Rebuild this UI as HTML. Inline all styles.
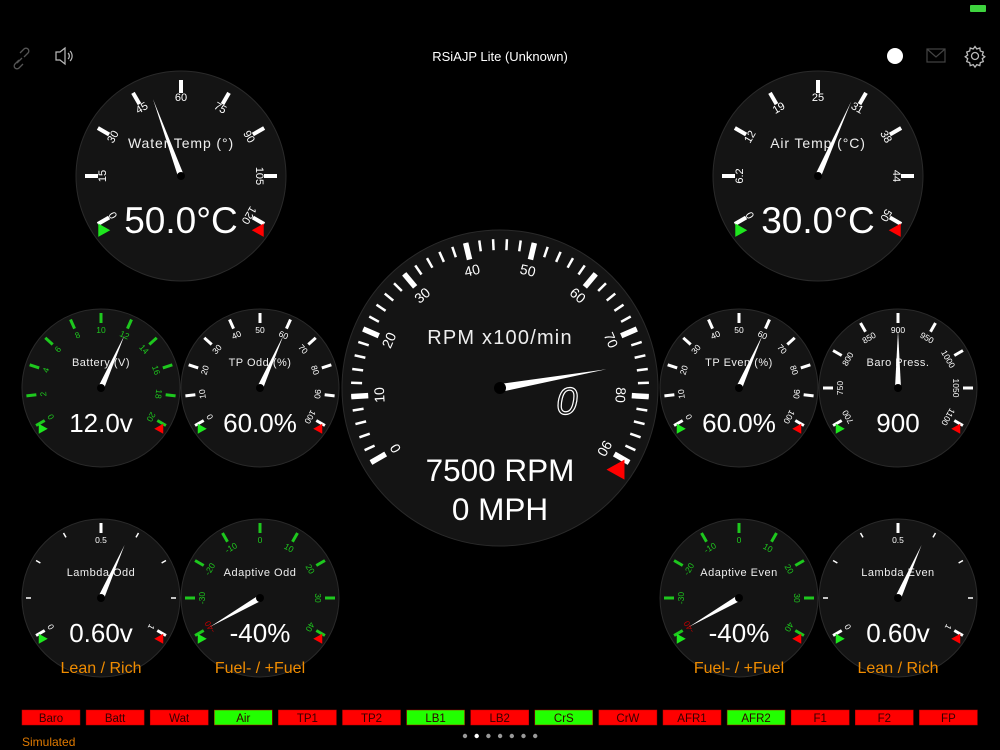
<!DOCTYPE html>
<html><head><meta charset="utf-8">
<style>
html,body{margin:0;padding:0;background:#000;width:1000px;height:750px;overflow:hidden}
svg{display:block}
text{font-family:"Liberation Sans",sans-serif}
</style></head>
<body>
<svg id="s" width="1000" height="750" viewBox="0 0 1000 750" xmlns="http://www.w3.org/2000/svg">
<rect width="1000" height="750" fill="#000"/>
<rect x="970" y="5" width="16" height="7" rx="1" fill="#3ed33e"/>
<text x="500" y="61" fill="#fff" font-size="13" text-anchor="middle">RSiAJP Lite (Unknown)</text>
<g stroke="#555" stroke-width="1.3" fill="none">
<path d="M17 63 l5-5 M20 53 l4-4 a2.5 2.5 0 0 1 4 4 l-4 4 M19 60 l-4 4 a2.5 2.5 0 0 0 4 4 l4-4"/>
</g>
<g stroke="#bbb" stroke-width="1.2" fill="none">
<path d="M56 52 h4 l5-4 v16 l-5-4 h-4z"/>
<path d="M68 53 a4 4 0 0 1 0 6 M70 51 a7 7 0 0 1 0 10"/>
</g>
<circle cx="895" cy="56" r="8" fill="#fff"/>
<g stroke="#444" stroke-width="1.2" fill="none"><rect x="927" y="49" width="18" height="13"/><path d="M927 49 l9 8 l9-8"/></g>
<g stroke="#bbb" stroke-width="1.3" fill="none"><circle cx="975" cy="56" r="3.5"/>
<path d="M975 46.5 l1.8 2.5 3-1 .5 3 3 1 -1 3 2.5 1.8 -2.5 1.8 1 3 -3 1 -.5 3 -3-1 -1.8 2.5 -1.8-2.5 -3 1 -.5-3 -3-1 1-3 -2.5-1.8 2.5-1.8 -1-3 3-1 .5-3 3 1z"/></g>
<g id="g"></g>
<text x="22" y="746" fill="#e07a00" font-size="12">Simulated</text>
</svg>
<script>
var G=document.getElementById('g'),out='';
function pt(cx,cy,r,a){var t=a*Math.PI/180;return [cx+r*Math.sin(t),cy-r*Math.cos(t)];}
function gauge(o){
 var cx=o.cx,cy=o.cy,R=o.R,s='';
 s+='<circle cx="'+cx+'" cy="'+cy+'" r="'+R+'" fill="#141414" stroke="#2a2a2a" stroke-width="1"/>';
 function ang(v){return (v-o.min)/(o.max-o.min)*240-120;}
 if(o.minor){for(var v=o.min;v<=o.max+1e-9;v+=o.minor){var a=ang(v),p1=pt(cx,cy,o.to,a),p2=pt(cx,cy,o.to-o.mlen,a);
  s+='<line x1="'+p1[0]+'" y1="'+p1[1]+'" x2="'+p2[0]+'" y2="'+p2[1]+'" stroke="#fff" stroke-width="'+o.mw+'"/>';}}
 for(var i=0;i<o.ticks.length;i++){var t=o.ticks[i],a=ang(t[0]),p1=pt(cx,cy,o.to,a),p2=pt(cx,cy,o.to-(t[3]||o.tlen),a);
  s+='<line x1="'+p1[0]+'" y1="'+p1[1]+'" x2="'+p2[0]+'" y2="'+p2[1]+'" stroke="'+o.col+'" stroke-width="'+(t[3]?o.tw*0.5:o.tw)+'"/>';
  if(t[1]!==''){var q=pt(cx,cy,o.lr,a);
   s+='<text x="'+q[0]+'" y="'+q[1]+'" fill="'+(t[2]||o.lcol||o.col)+'" font-size="'+o.lf+'" text-anchor="middle" dominant-baseline="central" transform="rotate('+a+' '+q[0]+' '+q[1]+')">'+t[1]+'</text>';}}
 var k=o.R/79;
 var gx=pt(cx,cy,R*0.9,-125),rx=pt(cx,cy,R*0.9,125);
 if(!o.noGreen)s+='<path d="M'+(gx[0]-4*k)+' '+(gx[1]-5*k)+' l'+(9*k)+' '+(5*k)+' l'+(-9*k)+' '+(5*k)+'z" fill="#1ee61e"/>';
 s+='<path d="M'+(rx[0]+4*k)+' '+(rx[1]-5*k)+' l'+(-9*k)+' '+(5*k)+' l'+(9*k)+' '+(5*k)+'z" fill="#f00"/>';
 s+='<text x="'+cx+'" y="'+(cy+o.ty)+'" fill="#eee" font-size="'+o.tf+'" text-anchor="middle" letter-spacing="'+(o.tls||0.5)+'">'+o.title+'</text>';
 s+='<text x="'+cx+'" y="'+(cy+o.vy)+'" fill="#fff" font-size="'+o.vf+'" text-anchor="middle">'+o.val+'</text>';
 if(o.sub)s+='<text x="'+cx+'" y="'+(cy+o.sy)+'" fill="'+(o.scol||'#f08c00')+'" font-size="'+o.sf+'" text-anchor="middle">'+o.sub+'</text>';
 var a=ang(o.nv),tip=pt(cx,cy,o.nl,a),b1=pt(cx,cy,o.nb,a-90),b2=pt(cx,cy,o.nb,a+90);
 s+='<path d="M'+b1[0]+' '+b1[1]+' L'+tip[0]+' '+tip[1]+' L'+b2[0]+' '+b2[1]+'z" fill="#fff"/>';
 s+='<circle cx="'+cx+'" cy="'+cy+'" r="'+o.hub+'" fill="#000"/>';
 out+=s;
}
function mk(min,step,labs){var r=[];for(var i=0;i<labs.length;i++)r.push([min+i*step,labs[i]]);return r;}
var big={R:105,to:96,tlen:13,tw:4,lr:78,lf:11,ty:-28,tf:14,tls:0.9,vy:57,vf:37,nl:82,nb:3,hub:4,col:'#fff'};
function B(x){var o={};for(var k in big)o[k]=big[k];for(var k in x)o[k]=x[k];return o;}
var sm={R:79,to:75,tlen:10,tw:3,lr:58,lf:8.5,ty:-22,tf:11,vy:44,vf:26,nl:58,nb:3,hub:4,col:'#fff',sy:75,sf:16};
function S(x){var o={};for(var k in sm)o[k]=sm[k];for(var k in x)o[k]=x[k];return o;}
gauge(B({cx:181,cy:176,min:0,max:120,ticks:mk(0,15,['0','15','30','45','60','75','90','105','120']),title:'Water Temp (°)',val:'50.0°C',nv:50}));
gauge(B({cx:818,cy:176,min:0,max:50,ticks:mk(0,6.25,['0','6.2','12','19','25','31','38','44','50']),title:'Air Temp (°C)',val:'30.0°C',nv:30}));
gauge(S({cx:101,cy:388,min:0,max:20,col:'#1ec81e',ticks:mk(0,2,['0','2','4','6','8','10','12','14','16','18','20']),title:'Battery (V)',val:'12.0v',nv:12}));
gauge(S({cx:260,cy:388,min:0,max:100,ticks:mk(0,10,['0','10','20','30','40','50','60','70','80','90','100']),title:'TP Odd (%)',val:'60.0%',nv:60}));
gauge(S({cx:739,cy:388,min:0,max:100,ticks:mk(0,10,['0','10','20','30','40','50','60','70','80','90','100']),title:'TP Even (%)',val:'60.0%',nv:60}));
gauge(S({cx:898,cy:388,min:700,max:1100,ticks:mk(700,50,['700','750','800','850','900','950','1000','1050','1100']),title:'Baro Press.',val:'900',nv:900}));
var lt=[[0,'0'],[0.125,'',0,5],[0.25,'',0,5],[0.375,'',0,5],[0.5,'0.5'],[0.625,'',0,5],[0.75,'',0,5],[0.875,'',0,5],[1,'1']];
gauge(S({cx:101,cy:598,min:0,max:1,ticks:lt,title:'Lambda Odd',val:'0.60v',nv:0.6,sub:'Lean / Rich',lcol:'#fff'}));
gauge(S({cx:898,cy:598,min:0,max:1,ticks:lt,title:'Lambda Even',val:'0.60v',nv:0.6,sub:'Lean / Rich',lcol:'#fff'}));
var at=[[-40,'-40','#c00000'],[-30,'-30'],[-20,'-20'],[-10,'-10'],[0,'0'],[10,'10'],[20,'20'],[30,'30'],[40,'40']];
gauge(S({cx:260,cy:598,min:-40,max:40,col:'#1ec81e',ticks:at,title:'Adaptive Odd',val:'-40%',nv:-40,sub:'Fuel- / +Fuel'}));
gauge(S({cx:739,cy:598,min:-40,max:40,col:'#1ec81e',ticks:at,title:'Adaptive Even',val:'-40%',nv:-40,sub:'Fuel- / +Fuel'}));
gauge({cx:500,cy:388,R:158,min:0,max:90,to:149,tlen:17,tw:5.5,minor:2,mlen:11,mw:2.5,lr:121,lf:14,col:'#fff',
 ticks:mk(0,10,['0','10','20','30','40','50','60','70','80','90']),title:'RPM x100/min',ty:-44,tf:20,tls:1.2,
 val:'7500 RPM',vy:93,vf:31.5,sub:'0 MPH',scol:'#fff',sy:132,sf:31.5,nv:75,nl:108,nb:4,hub:6,noGreen:true});
out+='<text x="567" y="414" fill="none" stroke="#fff" stroke-width="1.2" font-size="38" font-style="italic" text-anchor="middle">0</text>';
var labs=['Baro','Batt','Wat','Air','TP1','TP2','LB1','LB2','CrS','CrW','AFR1','AFR2','F1','F2','FP'];
var grn={Air:1,LB1:1,CrS:1,AFR2:1};
for(var i=0;i<15;i++){var x=22+i*64.1;
 out+='<rect x="'+x+'" y="710" width="58" height="15" fill="'+(grn[labs[i]]?'#22ff00':'#ff0000')+'" stroke="#b00" stroke-width="0.5"/>';
 out+='<text x="'+(x+29)+'" y="722" fill="#300" font-size="11.5" text-anchor="middle">'+labs[i]+'</text>';}
for(var i=0;i<7;i++)out+='<circle cx="'+(465+i*11.7)+'" cy="736" r="2.2" fill="'+(i==1?'#fff':'#999')+'"/>';
G.innerHTML=out;
</script>
</body></html>
